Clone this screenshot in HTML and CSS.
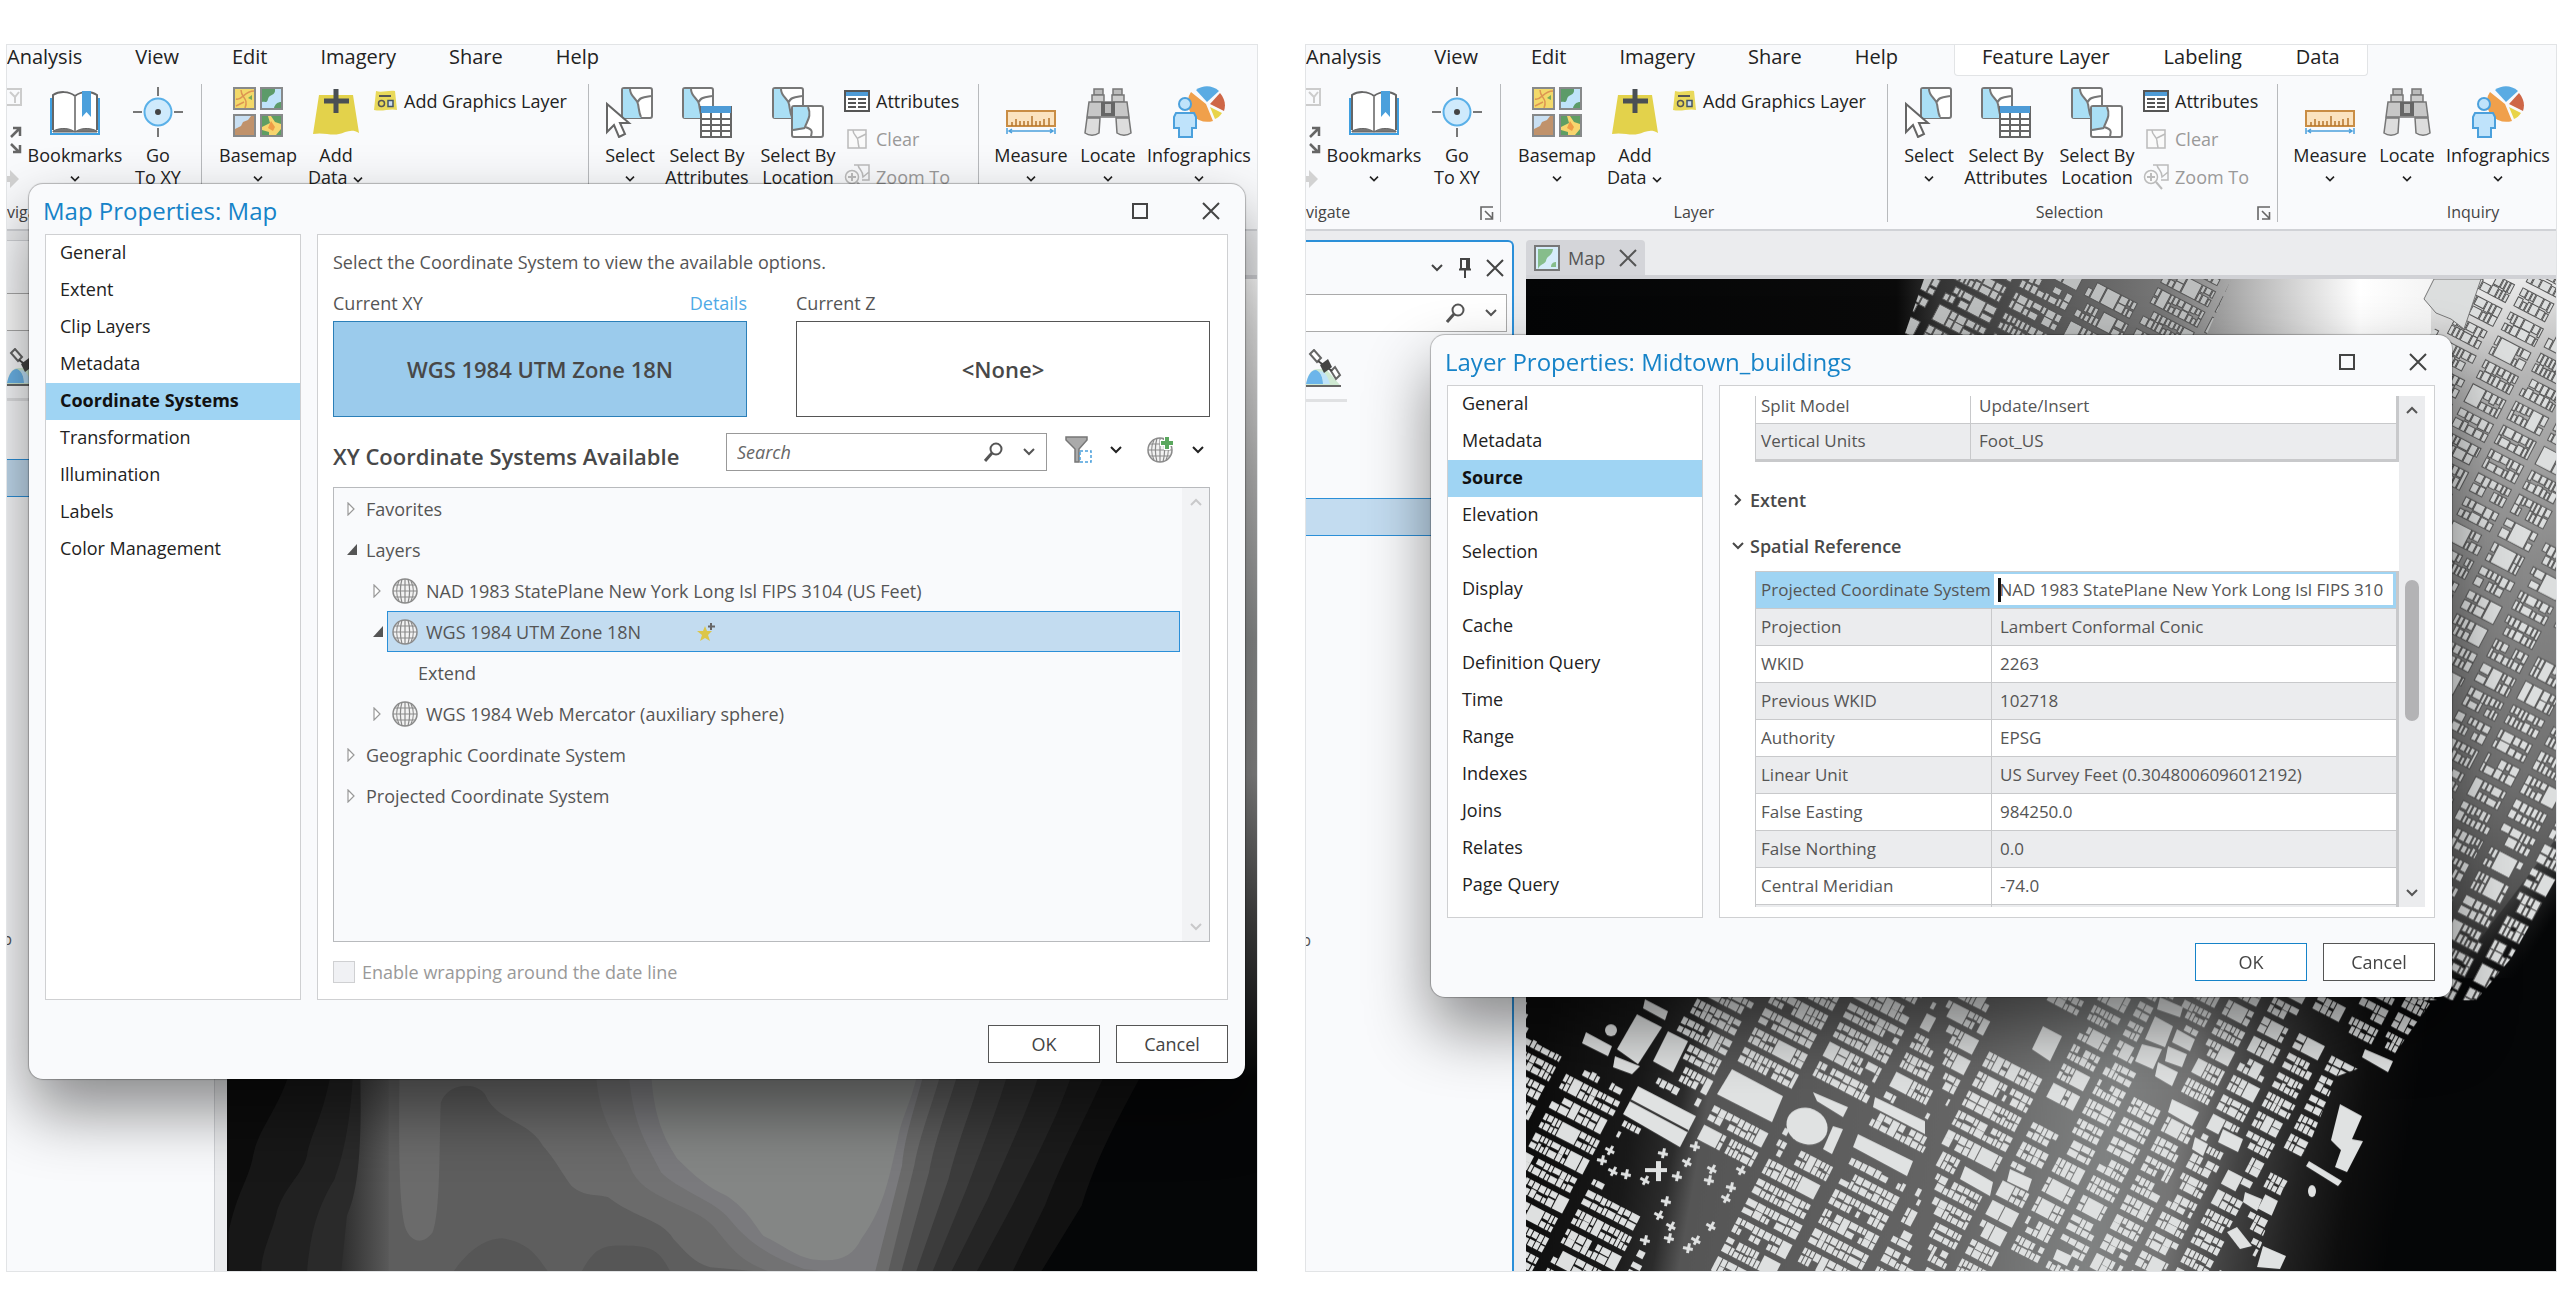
FILE: index.html
```html
<!DOCTYPE html>
<html lang="en">
<head>
<meta charset="utf-8">
<title>Map and layer properties</title>
<link rel="stylesheet" href="styles.css">
</head>
<body>
<svg class="sprite" aria-hidden="true">
  <symbol id="chev" viewBox="0 0 14 10"><path d="M2 2l5 5 5-5" fill="none" stroke="currentColor" stroke-width="2"/></symbol>
  <symbol id="close" viewBox="0 0 18 18"><path d="M1 1l16 16M17 1L1 17" fill="none" stroke="currentColor" stroke-width="2"/></symbol>
  <symbol id="max" viewBox="0 0 18 18"><path d="M2 2h14v14H2z" fill="none" stroke="currentColor" stroke-width="2"/></symbol>
  <symbol id="mag" viewBox="0 0 20 20"><circle cx="12" cy="7" r="5.500" fill="none" stroke="#555" stroke-width="2"/><path d="M8 11l-7 8" stroke="#555" stroke-width="3"/></symbol>
  <symbol id="pin" viewBox="0 0 14 20"><path d="M3 1h8v10H3zM1 11.500h12M7 12v8M9 1v10" fill="none" stroke="#444" stroke-width="2"/></symbol>
  <symbol id="launch" viewBox="0 0 14 15"><path d="M1 14V1h12M5 5l7 7M12.500 6v7H5" fill="none" stroke="#666" stroke-width="1.600"/></symbol>
  <symbol id="book" viewBox="0 0 50 46"><path d="M1 9v36h48V9" fill="#fff" stroke="#3f9fe0" stroke-width="2"/><path d="M3 41V6c6-4 16-4 22 1 6-5 16-5 22-1v35" fill="#fff" stroke="#666" stroke-width="2"/><path d="M3 42c8-4 17-3 22 1 5-4 14-5 22-1v1H3z" fill="#777" stroke="#666"/><path d="M25 7v35" stroke="#888" stroke-width="2"/><path d="M32 2h9v26l-4.500-5-4.500 5z" fill="#4ba0dc"/></symbol>
  <symbol id="gotoxy" viewBox="0 0 50 50"><circle cx="25" cy="25" r="13.500" fill="#cfeafc" stroke="#5ab0e8" stroke-width="2"/><circle cx="25" cy="25" r="3" fill="#444"/><path d="M25 0v9M25 41v9M0 25h9M41 25h9" stroke="#777" stroke-width="2"/></symbol>
  <symbol id="basemap" viewBox="0 0 50 50"><g stroke="#87898a" stroke-width="2"><path d="M1 1h21v21H1z" fill="#f3d96a"/><path d="M28 1h21v21H28z" fill="#bfe3fa"/><path d="M1 28h21v21H1z" fill="#c9dff2"/><path d="M28 28h21v21H28z" fill="#f7d56e"/></g><path d="M3 12c6 2 8-8 18-8M8 3c0 8 8 8 4 18M3 19l8-4" fill="none" stroke="#dd9552" stroke-width="1.500"/><path d="M15 11l4-3v5z" fill="#7aa957"/><path d="M29 2h13c1 7-6 5-7 10-1 5-4 2-6 3zM41 21c1-4 4-6 7-6v6z" fill="#5c9b69"/><path d="M2 48V42l6-3 2-4 5-2 3-4h3v19z" fill="#c0926b"/><path d="M29 29h6l2 7-8 4zM38 29h10v8l-6-2zM29 43l7 2v3h-7zM43 48l5-6v6z" fill="#5f9e63"/><path d="M38 34l4 6-2 4-5-3z" fill="#ee9c47"/></symbol>
  <symbol id="adddata" viewBox="0 0 48 46"><path d="M7 6h34l6 38c-8-5-14 0-20 1-8 2-15-2-26 0z" fill="#e3d24b"/><path d="M24 0v24M12 12h25" stroke="#4a4f54" stroke-width="5"/></symbol>
  <symbol id="graphics" viewBox="0 0 25 22"><path d="M3 1c6 2 12-1 19 0l2 19c-7-2-14 2-23 0z" fill="#e9d95a"/><path d="M6 6h12" stroke="#555" stroke-width="2"/><circle cx="8.500" cy="13.500" r="3" fill="none" stroke="#555" stroke-width="1.500"/><path d="M15 10.500h5v6h-5z" fill="#cde" stroke="#456" stroke-width="1.500"/></symbol>
  <symbol id="piece" viewBox="0 0 32 32"><rect x="1" y="1" width="30" height="30" rx="2" fill="#fff" stroke="#777" stroke-width="2"/><path d="M2 2h7c0 8 7 9 8 15 1 5 1 9 3 14H2z" fill="#aadff5"/><path d="M9 2c0 8 7 9 8 15 1 5 1 9 3 13M17 15c1-5 8-5 13-6" fill="none" stroke="#777" stroke-width="2"/></symbol>
  <symbol id="select" viewBox="0 0 48 52"><use href="#piece" x="15" y="1" width="32" height="32"/><path d="M1 18v28l7-7 5 12 6-3-5-11h9z" fill="#fff" stroke="#666" stroke-width="2"/></symbol>
  <symbol id="selattr" viewBox="0 0 50 52"><use href="#piece" x="0" y="1" width="32" height="32"/><path d="M19 21h30v30H19z" fill="#fff" stroke="#666" stroke-width="2"/><path d="M19 20h30v7H19z" fill="#4e9bd6"/><path d="M20 33h29M20 39h29M20 45h29M29 27v24M39 27v24" stroke="#666" stroke-width="2"/></symbol>
  <symbol id="selloc" viewBox="0 0 52 52"><use href="#piece" x="0" y="1" width="32" height="32"/><rect x="20" y="20" width="31" height="31" rx="2" fill="#fff" stroke="#777" stroke-width="2"/><path d="M21 21h15c4 9-1 14-3 22l-12 2z" fill="#aadff5"/><path d="M36 21c4 9-1 14-3 20 10 3 6 6 6 10M33 42l-12 2" fill="none" stroke="#777" stroke-width="2"/></symbol>
  <symbol id="attrs" viewBox="0 0 26 22"><path d="M1 1h24v20H1z" fill="#fff" stroke="#555" stroke-width="2"/><path d="M2 2h22v4H2z" fill="#4e9bd6"/><path d="M4 9h8M4 13h8M4 17h8M14 9h8M14 13h8M14 17h8" stroke="#555" stroke-width="2"/></symbol>
  <symbol id="clear" viewBox="0 0 20 20"><path d="M1 1h18v18H1z" fill="#fafafa" stroke="#bbb" stroke-width="1.500"/><path d="M6 1c0 6 5 6 5 11 0 3 1 5 1 7M11 9l8-4" fill="none" stroke="#bbb" stroke-width="1.500"/></symbol>
  <symbol id="zoomto" viewBox="0 0 26 26"><path d="M10 1h15v15h-7M14 1c1 5 5 5 5 12l6-5" fill="none" stroke="#bbb" stroke-width="1.500"/><circle cx="8" cy="13" r="6.500" fill="#fafafa" stroke="#bbb" stroke-width="1.500"/><path d="M4 13h8M8 9v8M13 18l6 7" stroke="#bbb" stroke-width="2"/></symbol>
  <symbol id="measure" viewBox="0 0 50 26"><path d="M1 2h48v15H1z" fill="#fbe3c0" stroke="#c98d45" stroke-width="2"/><path d="M6 17v-4M10 17v-7M14 17v-5M18 17v-5M22 17v-5M26 17V7M30 17v-5M34 17v-5M38 17v-7M43 17v-8" stroke="#b5752c" stroke-width="1.500"/><path d="M1 19v6M49 19v6M3 22h44M6 20l-3 2 3 2M44 20l3 2-3 2" stroke="#4ba0dc" stroke-width="1.500" fill="none"/></symbol>
  <symbol id="locate" viewBox="0 0 48 48"><g stroke="#777" stroke-width="1.500"><path d="M10 1h9v6h-9zM29 1h9v6h-9z" fill="#bbb"/><path d="M8 7h12v7H8zM28 7h12v7H28z" fill="#ccc"/><path d="M5 14h38l2 15H3z" fill="#c7c7c7"/><path d="M3 30h13l-1 15c-4 3-10 3-14 0zM32 30h13l2 15c-4 3-10 3-14 0z" fill="#ddd"/></g><path d="M17 14h14v14H17z" fill="#666"/><path d="M21 16h6v9h-6z" fill="#bbb"/></symbol>
  <symbol id="info" viewBox="0 0 52 52"><path d="M33 18L18 6a19 19 0 0 0 8 28 20 20 0 0 0 14 1z" fill="#f0a04b"/><path d="M34 16L23 4c7-5 16-5 23 1z" fill="#5aabe3"/><path d="M37 18l10-11c5 6 6 12 4 18z" fill="#ce6647"/><path d="M37 21l12 6c-2 3-4 5-7 6z" fill="#e8d449"/><circle cx="12" cy="18" r="6" fill="#bfe3fb" stroke="#4ba0dc" stroke-width="2"/><path d="M3 27h18l2 4v11h-4v9H6v-9H1V31z" fill="#bfe3fb" stroke="#4ba0dc" stroke-width="2"/></symbol>
  <symbol id="edge" viewBox="0 0 12 104"><path d="M-6 3H11v16h-17M0 6l5 5 4-5M5 11v6" fill="none" stroke="#ccc" stroke-width="2"/><path d="M1 51l8-8M3 42h7v8M1 58l8 8M10 59v7H3" fill="none" stroke="#666" stroke-width="2.500"/><path d="M0 84l9 9-9 9v-6h-6v-6h6z" fill="#d2d2d2"/></symbol>
  <symbol id="globe" viewBox="0 0 26 26"><circle cx="13" cy="13" r="12" fill="#f2f2f2" stroke="#8a8a8a" stroke-width="1.500"/><path d="M1 13h24M3 7h20M3 19h20M13 1v24M7 3c-3 6-3 14 0 20M19 3c3 6 3 14 0 20M10 1c-2 7-2 16 0 24M16 1c2 7 2 16 0 24" fill="none" stroke="#8a8a8a" stroke-width="1.200"/></symbol>
  <symbol id="filter" viewBox="0 0 28 28"><path d="M1 1h21v3l-8 9v13h-4V13L1 4z" fill="#aaa" stroke="#777" stroke-width="1.500"/><path d="M15 15h11v11H15z" fill="#fff" stroke="#4ba0dc" stroke-width="1.500" stroke-dasharray="3 2"/></symbol>
  <symbol id="globeadd" viewBox="0 0 28 28"><use href="#globe" x="0" y="1" width="26" height="26"/><path d="M20 1v13M13 7h14" stroke="#fff" stroke-width="6"/><path d="M20 1v12M14 7h12" stroke="#5aa75e" stroke-width="4"/></symbol>
  <symbol id="star" viewBox="0 0 18 18"><path d="M8 3l2 5h5l-4 4 2 6-5-3-5 3 2-6-5-4h6z" fill="#dcc64a"/><path d="M14 0v7M11 3.500h7" stroke="#666" stroke-width="2"/></symbol>
  <symbol id="closed" viewBox="0 0 8 14"><path d="M1 1l6 6-6 6z" fill="#fff" stroke="#999" stroke-width="1.200"/></symbol>
  <symbol id="open" viewBox="0 0 11 12"><path d="M11 0v12H0z" fill="#555"/></symbol>
  <symbol id="mapico" viewBox="0 0 26 26"><path d="M1 1h24v24H1z" fill="#d6ecfa" stroke="#777" stroke-width="2"/><path d="M4 4h15c-1 8-6 6-7 12-2 4-5 2-8 8zM17 22c0-4 3-5 5-5v5z" fill="#86bd8b"/></symbol>
  <symbol id="sat" viewBox="0 0 36 38"><path d="M0 36c2-12 6-16 12-16h8l14 16z" fill="#cfe9d2"/><path d="M0 35c2-9 5-14 10-14 5 2 7 8 7 14z" fill="#6cb5ea"/><path d="M17 35c0-6-2-10-4-13 6 0 9 6 11 13z" fill="#bfe3fa"/><path d="M0 37h35" stroke="#666" stroke-width="2"/><g fill="#fff" stroke="#666" stroke-width="2"><path d="M4 5l4-4 7 8-4 4zM25 22l4-4 5 8-4 4z"/></g><path d="M14 16l8-6 4 8-8 6z" fill="#444"/><path d="M12 12l14 10" stroke="#444" stroke-width="2"/></symbol>
</svg>

<main class="shots">
<section class="app" aria-label="Map window">
  <div class="ribbon">
    <nav class="tabs"><button class="tab tab-cut">Analysis</button><button class="tab">View</button><button class="tab">Edit</button><button class="tab">Imagery</button><button class="tab">Share</button><button class="tab">Help</button></nav>
    <div class="groups">
      <div class="group g-nav"><div class="tools"><svg class="edge"><use href="#edge"/></svg>
        <button class="tool w100"><svg class="ico" width="50" height="46"><use href="#book"/></svg><span>Bookmarks</span><svg class="dd"><use href="#chev"/></svg></button>
        <button class="tool w66"><svg class="ico" width="50" height="50"><use href="#gotoxy"/></svg><span>Go<br>To XY</span></button></div>
        <div class="caption caption-cut"><span>vigate</span><svg class="launch"><use href="#launch"/></svg></div></div>
      <div class="group g-layer"><div class="tools">
        <button class="tool w88"><svg class="ico" width="50" height="50"><use href="#basemap"/></svg><span>Basemap</span><svg class="dd"><use href="#chev"/></svg></button>
        <button class="tool w68"><svg class="ico" width="48" height="46"><use href="#adddata"/></svg><span>Add<br>Data <svg class="dd-in"><use href="#chev"/></svg></span></button>
        <div class="stack"><button class="mini"><svg width="25" height="22"><use href="#graphics"/></svg>Add Graphics Layer</button></div></div>
        <div class="caption">Layer</div></div>
      <div class="group g-sel"><div class="tools">
        <button class="tool w58"><svg class="ico" width="48" height="52"><use href="#select"/></svg><span>Select</span><svg class="dd"><use href="#chev"/></svg></button>
        <button class="tool w96"><svg class="ico" width="50" height="52"><use href="#selattr"/></svg><span>Select By<br>Attributes</span></button>
        <button class="tool w86"><svg class="ico" width="52" height="52"><use href="#selloc"/></svg><span>Select By<br>Location</span></button>
        <div class="stack"><button class="mini"><svg width="26" height="22"><use href="#attrs"/></svg>Attributes</button><button class="mini" disabled><svg width="26" height="20"><use href="#clear"/></svg>Clear</button><button class="mini" disabled><svg width="26" height="26"><use href="#zoomto"/></svg>Zoom To</button></div></div>
        <div class="caption">Selection<svg class="launch"><use href="#launch"/></svg></div></div>
      <div class="group g-inq"><div class="tools">
        <button class="tool w88"><svg class="ico low" width="50" height="26"><use href="#measure"/></svg><span>Measure</span><svg class="dd"><use href="#chev"/></svg></button>
        <button class="tool w66"><svg class="ico" width="48" height="48"><use href="#locate"/></svg><span>Locate</span><svg class="dd"><use href="#chev"/></svg></button>
        <button class="tool w116"><svg class="ico" width="52" height="52"><use href="#info"/></svg><span>Infographics</span><svg class="dd"><use href="#chev"/></svg></button></div>
        <div class="caption">Inquiry</div></div>
    </div>
  </div>
  <div class="work">
    <aside class="pane">
      <div class="pane-head"></div><div class="pane-search"></div>
      <div class="pane-tools"><svg width="36" height="38"><use href="#sat"/></svg></div>
      <div class="pane-row row-first"></div><div class="pane-text">p</div>
    </aside>
    <div class="view"><div class="view-tabs"></div>
      <svg class="map" viewBox="0 0 1030 993" preserveAspectRatio="none" role="img" aria-label="Elevation surface">
        <defs>
          <linearGradient id="strip" x1="0" y1="0" x2="0" y2="1"><stop offset="0" stop-color="#fff"/><stop offset=".06" stop-color="#e8e8e8"/><stop offset=".25" stop-color="#b8b8b8"/><stop offset=".45" stop-color="#8d8f8f"/><stop offset=".62" stop-color="#888"/><stop offset=".8" stop-color="#444"/><stop offset="1" stop-color="#050607"/></linearGradient>
          <linearGradient id="rise"><stop offset="0" stop-color="#2e2e2e"/><stop offset="1" stop-color="#5e5e5e"/></linearGradient>
        </defs>
        <rect width="1030" height="993" fill="#0c0c0c"/>
        <g transform="translate(-227 561) scale(.8163 .3333)">
          <path fill="#171717" d="M365 600C350 800 318 850 310 950 305 1020 290 1060 280 1180V1300H1500V600z"/>
          <path fill="#212121" d="M410 600C405 800 380 880 376 950 370 1010 345 1050 338 1130 330 1200 320 1240 320 1300H1500V600z"/>
          <path fill="#2a2a2a" d="M434 600C432 850 420 950 410 1020 385 1120 380 1200 376 1300H1500V600z"/>
          <path fill="url(#rise)" d="M440 600C445 900 440 1050 425 1130L418 1300H482V600z"/>
          <path fill="#5e5e5e" d="M476 600H1500V1300H476z"/>
          <path fill="#6b6b6b" d="M490 600C488 900 488 1100 497 1170 505 1215 520 1215 530 1180 540 1120 538 900 540 790 550 725 590 725 597 780 615 850 650 850 665 920 680 960 690 1010 700 1040 715 1075 735 1065 745 1075 780 1140 810 1140 825 1200 840 1240 850 1270 870 1285L940 1300H1500V600z"/>
          <path fill="#727273" d="M730 600C724 850 760 900 775 1000 795 1090 860 1100 880 1180 900 1240 910 1270 945 1300H1500V600z"/>
          <path fill="#7a7a7d" d="M768 600C770 850 790 900 810 1000 830 1050 870 1080 890 1130 910 1190 930 1240 985 1290L1020 1300H1500V600z"/>
          <path fill="#848685" d="M797 600C795 830 815 900 830 960 850 1010 870 1050 890 1070 915 1110 925 1160 935 1190 960 1220 980 1260 1000 1262 1030 1270 1045 1250 1055 1200 1085 1100 1090 1000 1100 900 1105 820 1125 760 1130 600z"/>
          <path fill="#6b6b6b" d="M1140 600C1130 760 1110 850 1105 980L1072 1300H1500V600z"/>
          <path fill="#5b5b5b" d="M1162 600C1150 760 1130 850 1120 980L1088 1300H1500V600z"/>
          <path fill="#4b4b4b" d="M1184 600C1170 760 1150 850 1138 1000L1104 1300H1500V600z"/>
          <path fill="#3c3c3c" d="M1212 600C1200 760 1180 850 1162 1020L1122 1300H1500V600z"/>
          <path fill="#303030" d="M1246 600C1230 760 1210 880 1184 1050L1142 1300H1500V600z"/>
          <path fill="#252525" d="M1285 600C1270 760 1245 880 1210 1080L1165 1300H1500V600z"/>
          <path fill="#1b1b1b" d="M1325 600C1310 760 1285 880 1240 1100L1196 1300H1500V600z"/>
          <path fill="#111" d="M1368 600C1350 760 1315 880 1280 1100L1240 1300H1600V600z"/>
          <path fill="#050607" d="M1420 600C1390 760 1350 900 1325 1100L1275 1300H1600V600z"/>
          <path fill="#565656" d="M555 1300C575 1230 595 1200 615 1198 650 1210 660 1260 672 1300zM712 1300C730 1220 740 1218 770 1220 805 1220 810 1250 822 1300z"/>
        </g>
        <rect x="980" width="50" height="800" fill="url(#strip)"/>
      </svg></div>
  </div>
  <div class="dialog dialog-map" role="dialog" aria-label="Map Properties: Map">
    <header class="title"><h1>Map Properties: Map</h1><button aria-label="Maximize"><svg width="18" height="18"><use href="#max"/></svg></button><button aria-label="Close"><svg width="18" height="18"><use href="#close"/></svg></button></header>
    <div class="body">
      <nav class="pages"><button>General</button><button>Extent</button><button>Clip Layers</button><button>Metadata</button><button class="on">Coordinate Systems</button><button>Transformation</button><button>Illumination</button><button>Labels</button><button>Color Management</button></nav>
      <div class="content crs">
        <p class="intro">Select the Coordinate System to view the available options.</p>
        <div class="current">
          <div><div class="cur-head"><span>Current XY</span><a href="#details">Details</a></div><button class="cur on">WGS 1984 UTM Zone 18N</button></div>
          <div><div class="cur-head"><span>Current Z</span></div><button class="cur">&lt;None&gt;</button></div>
        </div>
        <div class="finder"><h2>XY Coordinate Systems Available</h2>
          <div class="search"><input type="text" placeholder="Search" aria-label="Search"><svg width="20" height="20"><use href="#mag"/></svg><svg class="thin" width="14" height="10"><use href="#chev"/></svg></div>
          <button class="menu" aria-label="Filter"><svg width="28" height="28"><use href="#filter"/></svg><svg width="14" height="10"><use href="#chev"/></svg></button>
          <button class="menu" aria-label="Add coordinate system"><svg width="28" height="28"><use href="#globeadd"/></svg><svg width="14" height="10"><use href="#chev"/></svg></button></div>
        <div class="tree">
          <ul>
            <li><div class="node"><i><svg width="8" height="14"><use href="#closed"/></svg></i><span>Favorites</span></div></li>
            <li><div class="node"><i><svg width="10" height="11"><use href="#open"/></svg></i><span>Layers</span></div>
              <ul>
                <li><div class="node"><i><svg width="8" height="14"><use href="#closed"/></svg></i><span><svg width="26" height="26"><use href="#globe"/></svg>NAD 1983 StatePlane New York Long Isl FIPS 3104 (US Feet)</span></div></li>
                <li><div class="node"><i><svg width="10" height="11"><use href="#open"/></svg></i><span class="picked"><svg width="26" height="26"><use href="#globe"/></svg>WGS 1984 UTM Zone 18N<svg class="fav" width="18" height="18"><use href="#star"/></svg></span></div>
                  <ul><li><div class="node"><i></i><span>Extend</span></div></li></ul></li>
                <li><div class="node"><i><svg width="8" height="14"><use href="#closed"/></svg></i><span><svg width="26" height="26"><use href="#globe"/></svg>WGS 1984 Web Mercator (auxiliary sphere)</span></div></li>
              </ul></li>
            <li><div class="node"><i><svg width="8" height="14"><use href="#closed"/></svg></i><span>Geographic Coordinate System</span></div></li>
            <li><div class="node"><i><svg width="8" height="14"><use href="#closed"/></svg></i><span>Projected Coordinate System</span></div></li>
          </ul>
          <div class="bar faint"><svg class="up" width="14" height="10"><use href="#chev"/></svg><svg width="14" height="10"><use href="#chev"/></svg></div>
        </div>
        <label class="wrap"><input type="checkbox" disabled>Enable wrapping around the date line</label>
      </div>
    </div>
    <footer class="actions"><button>OK</button><button>Cancel</button></footer>
  </div>
</section>

<section class="app" aria-label="Layer window">
  <div class="ribbon">
    <nav class="tabs"><button class="tab tab-cut">Analysis</button><button class="tab">View</button><button class="tab">Edit</button><button class="tab">Imagery</button><button class="tab">Share</button><button class="tab">Help</button><span class="context"><button class="tab">Feature Layer</button><button class="tab">Labeling</button><button class="tab">Data</button></span></nav>
    <div class="groups">
      <div class="group g-nav"><div class="tools"><svg class="edge"><use href="#edge"/></svg>
        <button class="tool w100"><svg class="ico" width="50" height="46"><use href="#book"/></svg><span>Bookmarks</span><svg class="dd"><use href="#chev"/></svg></button>
        <button class="tool w66"><svg class="ico" width="50" height="50"><use href="#gotoxy"/></svg><span>Go<br>To XY</span></button></div>
        <div class="caption caption-cut"><span>vigate</span><svg class="launch"><use href="#launch"/></svg></div></div>
      <div class="group g-layer"><div class="tools">
        <button class="tool w88"><svg class="ico" width="50" height="50"><use href="#basemap"/></svg><span>Basemap</span><svg class="dd"><use href="#chev"/></svg></button>
        <button class="tool w68"><svg class="ico" width="48" height="46"><use href="#adddata"/></svg><span>Add<br>Data <svg class="dd-in"><use href="#chev"/></svg></span></button>
        <div class="stack"><button class="mini"><svg width="25" height="22"><use href="#graphics"/></svg>Add Graphics Layer</button></div></div>
        <div class="caption">Layer</div></div>
      <div class="group g-sel"><div class="tools">
        <button class="tool w58"><svg class="ico" width="48" height="52"><use href="#select"/></svg><span>Select</span><svg class="dd"><use href="#chev"/></svg></button>
        <button class="tool w96"><svg class="ico" width="50" height="52"><use href="#selattr"/></svg><span>Select By<br>Attributes</span></button>
        <button class="tool w86"><svg class="ico" width="52" height="52"><use href="#selloc"/></svg><span>Select By<br>Location</span></button>
        <div class="stack"><button class="mini"><svg width="26" height="22"><use href="#attrs"/></svg>Attributes</button><button class="mini" disabled><svg width="26" height="20"><use href="#clear"/></svg>Clear</button><button class="mini" disabled><svg width="26" height="26"><use href="#zoomto"/></svg>Zoom To</button></div></div>
        <div class="caption">Selection<svg class="launch"><use href="#launch"/></svg></div></div>
      <div class="group g-inq"><div class="tools">
        <button class="tool w88"><svg class="ico low" width="50" height="26"><use href="#measure"/></svg><span>Measure</span><svg class="dd"><use href="#chev"/></svg></button>
        <button class="tool w66"><svg class="ico" width="48" height="48"><use href="#locate"/></svg><span>Locate</span><svg class="dd"><use href="#chev"/></svg></button>
        <button class="tool w116"><svg class="ico" width="52" height="52"><use href="#info"/></svg><span>Infographics</span><svg class="dd"><use href="#chev"/></svg></button></div>
        <div class="caption">Inquiry</div></div>
    </div>
  </div>
  <div class="work">
    <aside class="pane pane-active">
      <div class="pane-head"><svg width="14" height="10"><use href="#chev"/></svg><svg width="14" height="20"><use href="#pin"/></svg><svg width="18" height="18"><use href="#close"/></svg></div>
      <div class="pane-search"><svg width="20" height="20"><use href="#mag"/></svg><svg width="14" height="10"><use href="#chev"/></svg></div>
      <div class="pane-tools"><svg width="36" height="38"><use href="#sat"/></svg></div>
      <div class="pane-row row-second"></div><div class="pane-text">p</div>
    </aside>
    <div class="view"><div class="view-tabs"><button class="view-tab"><svg width="26" height="26"><use href="#mapico"/></svg>Map<svg width="18" height="18"><use href="#close"/></svg></button></div>
      <canvas class="map" id="city" width="1030" height="993"></canvas></div>
  </div>
  <div class="dialog dialog-layer" role="dialog" aria-label="Layer Properties: Midtown_buildings">
    <header class="title"><h1>Layer Properties: Midtown_buildings</h1><button aria-label="Maximize"><svg width="18" height="18"><use href="#max"/></svg></button><button aria-label="Close"><svg width="18" height="18"><use href="#close"/></svg></button></header>
    <div class="body">
      <nav class="pages"><button>General</button><button>Metadata</button><button class="on">Source</button><button>Elevation</button><button>Selection</button><button>Display</button><button>Cache</button><button>Definition Query</button><button>Time</button><button>Range</button><button>Indexes</button><button>Joins</button><button>Relates</button><button>Page Query</button></nav>
      <div class="content source">
        <div class="scroll">
          <table class="props short"><tr><th>Split Model</th><td>Update/Insert</td></tr><tr><th>Vertical Units</th><td>Foot_US</td></tr></table>
          <button class="fold shut"><svg width="14" height="10"><use href="#chev"/></svg>Extent</button>
          <button class="fold"><svg width="14" height="10"><use href="#chev"/></svg>Spatial Reference</button>
          <table class="props long">
            <tr class="edit"><th><label for="pcs">Projected Coordinate System</label></th><td><input id="pcs" type="text" value="NAD 1983 StatePlane New York Long Isl FIPS 310"><b class="caret"></b></td></tr>
            <tr><th>Projection</th><td>Lambert Conformal Conic</td></tr>
            <tr><th>WKID</th><td>2263</td></tr>
            <tr><th>Previous WKID</th><td>102718</td></tr>
            <tr><th>Authority</th><td>EPSG</td></tr>
            <tr><th>Linear Unit</th><td>US Survey Feet (0.3048006096012192)</td></tr>
            <tr><th>False Easting</th><td>984250.0</td></tr>
            <tr><th>False Northing</th><td>0.0</td></tr>
            <tr><th>Central Meridian</th><td>-74.0</td></tr>
            <tr><th></th><td></td></tr>
          </table>
        </div>
        <div class="bar"><svg class="up" width="14" height="10"><use href="#chev"/></svg><div class="thumb"></div><svg width="14" height="10"><use href="#chev"/></svg></div>
      </div>
    </div>
    <footer class="actions"><button class="default">OK</button><button>Cancel</button></footer>
  </div>
</section>
</main>
<script src="map.js"></script>
</body>
</html>
```

FILE: styles.css
```css
* { box-sizing: border-box; }
body { margin: 0; background: #fff; color: #333; font: 18px/22px "Open Sans", "Noto Sans", sans-serif; }
button { margin: 0; padding: 0; border: 0; background: none; color: inherit; font: inherit; text-align: left; }
ul { margin: 0; padding: 0; list-style: none; }
h1, h2, p { margin: 0; font-weight: 400; }
svg { flex: none; }
.sprite { position: absolute; width: 0; height: 0; }

.shots { display: grid; grid-template-columns: minmax(0, 1fr) minmax(0, 1fr); gap: 47px; min-height: 100vh; padding: 44px 3px 42px 6px; }
.app { position: relative; display: flex; flex-direction: column; overflow: hidden; border: 1px solid #e2e4e6; background: #f9fafc; }

/* ribbon */
.ribbon { color: #222; border-bottom: 2px solid #d0d2d6; }
.tabs { display: flex; height: 31px; font-size: 20px; padding-bottom: 7px; }
.tab { padding: 0 27px 0 26px; white-space: nowrap; }
.tab-cut { padding-left: 0; }
.context { display: flex; height: 31px; margin-left: 29px; padding: 0 0 7px; background: #fff; border: 1px solid #e2e4e6; border-top: 0; border-radius: 0 0 4px 4px; }
.context .tab { padding: 0 27px; }
.groups { display: flex; padding-top: 8px; }
.group { flex: none; display: flex; flex-direction: column; height: 138px; margin-bottom: 7px; border-right: 1px solid #b8babd; }
.g-nav { width: 195px; }
.g-layer { width: 387px; }
.g-sel { width: 390px; }
.g-inq { width: 390px; border: 0; }
.tools { display: flex; height: 122px; padding-top: 2px; }
.g-layer .tools, .g-sel .tools { padding-left: 12px; }
.g-inq .tools { padding-left: 8px; }
.edge { width: 18px; height: 104px; }
.tool { display: flex; flex-direction: column; align-items: center; justify-content: flex-start; text-align: center; white-space: nowrap; }
.tool span { flex: none; }
.ico { margin-bottom: 6px; height: 52px; }
.low { padding-top: 20px; }
.dd { width: 12px; height: 8px; margin-top: 9px; }
.dd-in { width: 12px; height: 8px; }
.w58 { width: 58px; } .w66 { width: 66px; } .w68 { width: 68px; } .w86 { width: 86px; } .w88 { width: 88px; } .w96 { width: 96px; } .w100 { width: 100px; } .w116 { width: 116px; }
.stack { display: flex; flex-direction: column; gap: 6px; padding-left: 3px; }
.mini { display: flex; align-items: center; gap: 6px; height: 32px; padding-bottom: 2px; white-space: nowrap; }
.mini:disabled { color: #999; }
.caption { position: relative; height: 20px; color: #444; font-size: 16px; line-height: 20px; text-align: center; }
.caption-cut { text-align: left; }
.g-sel .caption { padding-right: 26px; }
.launch { position: absolute; right: 6px; top: 4px; width: 14px; height: 15px; }

/* workspace behind the dialogs */
.work { flex: 1; display: grid; grid-template-columns: 208px minmax(0, 1fr); gap: 12px; padding-top: 9px; background: #ebecee; }
.pane { background: #f9fafc; border-top: 1px solid #d0d2d6; border-right: 1px solid #d0d2d6; }
.pane-active { border: solid #2b8fd8; border-width: 2px 2px 0 0; border-radius: 0 6px 0 0; }
.pane-head { display: flex; align-items: center; justify-content: flex-end; gap: 14px; height: 52px; padding-right: 8px; color: #444; }
.pane-search { display: flex; align-items: center; justify-content: flex-end; gap: 18px; height: 38px; margin-right: 5px; padding-right: 8px; background: #fff; border: 1px solid #aaa; border-left: 0; color: #555; }
.pane-tools { height: 70px; width: 41px; padding-top: 17px; border-bottom: 3px solid #e0e1e3; }
.pane-row { height: 38px; background: #c3dcf0; border: solid #2b8fd8; border-width: 1px 0; }
.row-first { margin: 58px 0 434px; }
.row-second { margin: 96px 0 396px; }
.pane-text { width: 5px; margin-top: -3px; overflow: hidden; direction: rtl; font-size: 16px; color: #555; }
.view { display: flex; flex-direction: column; min-width: 0; }
.view-tabs { height: 39px; border-bottom: 4px solid #d0d1d5; }
.view-tab { display: flex; align-items: center; gap: 8px; height: 35px; padding: 0 8px; background: #d4d5d9; border-radius: 4px 4px 0 0; color: #555; }
.view-tab svg:last-child { margin-left: 6px; }
.map { display: block; flex: 1 1 0; width: 100%; min-height: 0; }

/* dialogs */
.dialog { position: absolute; display: flex; flex-direction: column; padding: 0 17px 16px 16px; background: #f9fafc; border-radius: 14px; box-shadow: 0 0 1px 1px rgba(0, 0, 0, .25), 0 32px 64px rgba(0, 0, 0, .45); }
.dialog-map { inset: 139px 12px 192px 22px; }
.dialog-layer { inset: 290px 104px 274px 125px; }
.title { display: flex; align-items: center; height: 50px; margin-left: -2px; padding: 4px 8px 0 0; gap: 53px; color: #444; }
.title h1 { flex: 1; font-size: 24px; line-height: 32px; color: #1683c8; }
.title button { display: flex; }
.body { flex: 1; min-height: 0; display: grid; grid-template-columns: 256px minmax(0, 1fr); grid-template-rows: minmax(0, 1fr); gap: 16px; }
.pages, .content { border: 1px solid #cfd0d2; background: #fff; }
.pages { display: flex; flex-direction: column; color: #222; }
.pages button { flex: none; height: 37px; padding: 0 0 3px 14px; }
.pages .on { background: #9fd4f3; color: #111; font-weight: 700; }
.actions { display: flex; justify-content: flex-end; gap: 16px; padding-top: 25px; }
.actions button { width: 112px; height: 38px; border: 1px solid #555; background: #fff; text-align: center; color: #444; }
.actions .default { border-color: #1683c8; }

/* coordinate system page */
.crs { display: flex; flex-direction: column; padding: 16px 17px 16px 15px; color: #555; }
.current { display: grid; grid-template-columns: 1fr 1fr; gap: 49px; margin-top: 19px; }
.cur-head { display: flex; justify-content: space-between; height: 29px; }
.cur-head a { color: #4faae6; text-decoration: none; }
.cur { display: block; width: 100%; height: 96px; border: 1px solid #555; background: #fff; color: #484848; font-size: 22px; font-weight: 600; text-align: center; }
.cur.on { background: #9bcbec; border-color: #2b7fb8; }
.finder { display: flex; align-items: center; height: 38px; margin: 16px 0; }
.finder h2 { flex: 1; padding-top: 8px; font-size: 22px; font-weight: 600; color: #484848; white-space: nowrap; }
.search { display: flex; align-items: center; gap: 18px; width: 321px; height: 38px; padding: 0 10px; border: 1px solid #999; background: #fff; }
.search input { flex: 1; min-width: 0; padding: 0; border: 0; font: inherit; font-style: italic; }
.search input::placeholder { color: #666; opacity: 1; }
.menu { display: flex; align-items: center; gap: 16px; margin-left: 18px; padding-bottom: 4px; color: #222; }
.menu + .menu { margin-left: 24px; margin-right: 5px; }
.tree { flex: 1; display: flex; min-height: 0; border: 1px solid #b8babd; background: #f9fafc; }
.tree > ul { flex: 1; padding: 0 2px 0 13px; }
.tree ul ul { padding-left: 26px; }
.node { display: flex; align-items: center; height: 41px; }
.node i { display: flex; width: 14px; }
.node i svg { display: block; }
.node span { flex: 1; display: flex; align-items: center; gap: 8px; height: 41px; padding-left: 5px; white-space: nowrap; }
.node .picked { padding-left: 4px; background: #c3dcf0; border: 1px solid #2b8fd8; }
.fav { margin-left: 48px; }
.bar { display: flex; flex-direction: column; justify-content: space-between; align-items: center; width: 27px; padding: 9px 0; background: #ebecee; color: #555; }
.faint { background: #f2f3f5; color: #c8c8ca; }
.up { transform: scaleY(-1); }
.wrap { display: flex; align-items: center; gap: 7px; height: 22px; margin: 19px 0 0; color: #999; }
.wrap input { appearance: none; width: 22px; height: 22px; margin: 0; border: 1px solid #cfd0d2; background: #f0f1f4; }

/* source page */
.source { display: flex; padding: 10px 9px 10px 0; color: #555; }
.scroll { flex: 1; min-width: 0; overflow: hidden; }
.source .bar { position: relative; width: 26px; }
.thumb { position: absolute; top: 184px; left: 6px; width: 14px; height: 141px; border-radius: 7px; background: #b3b3b5; }
.props { width: calc(100% - 35px); margin-left: 35px; border-collapse: collapse; table-layout: fixed; border-right: 3px solid #c8c9cb; border-left: 1px solid #c8c9cb; font-size: 17px; line-height: 20px; }
.props th, .props td { height: 37px; padding: 0 0 0 5px; border-bottom: 1px solid #c8c9cb; font-weight: 400; text-align: left; white-space: nowrap; }
.props td { padding-left: 8px; border-left: 1px solid #c8c9cb; }
.short { border-bottom: 3px solid #c8c9cb; margin-bottom: 23px; }
.short th { width: 215px; }
.short tr:first-child th, .short tr:first-child td { height: 27px; padding-bottom: 6px; }
.long th { width: 236px; }
.props tr:nth-child(even) { background: #ebecee; }
.long { border-top: 1px solid #c8c9cb; margin-top: 10px; }
.props .edit th { background: #9fd4f3; }
.props .edit td { position: relative; padding: 0 0 0 2px; background: #9fd4f3; border-left: 0; }
.edit input { display: block; width: calc(100% - 3px); height: 31px; padding: 0 0 0 6px; border: 0; background: #fff; color: #555; font: inherit; }
.caret { position: absolute; left: 6px; top: 6px; width: 3px; height: 24px; background: #111; }
.fold { display: flex; align-items: center; gap: 5px; height: 30px; margin: 0 0 16px 11px; font-weight: 600; color: #484848; }
.fold + .fold { margin-bottom: 0; }
.shut svg { transform: rotate(-90deg); }
```

FILE: map.js
```js
// Draws the building footprints over the elevation surface.
const canvas = document.getElementById('city');
const g = canvas.getContext('2d');
let seed = 7;
const rnd = () => { seed = (seed * 16807) % 2147483647; return seed / 2147483647; };

const SLOPE = 27.5 * Math.PI / 180;
const COS = Math.cos(SLOPE), SIN = Math.sin(SLOPE);

function ramp(x0, y0, x1, y1, stops) {
  const r = g.createLinearGradient(x0, y0, x1, y1);
  stops.forEach(([at, color]) => r.addColorStop(at, color));
  return r;
}
function poly(points) {
  g.beginPath();
  points.forEach(([x, y], i) => (i ? g.lineTo(x, y) : g.moveTo(x, y)));
  g.closePath();
}
function inside(points, x, y) {
  let hit = false;
  for (let i = 0, j = points.length - 1; i < points.length; j = i++) {
    const [xi, yi] = points[i], [xj, yj] = points[j];
    if ((yi > y) !== (yj > y) && x < (xj - xi) * (y - yi) / (yj - yi) + xi) hit = !hit;
  }
  return hit;
}

// Surface: the south of the island, the northern edge, the eastern strip.
g.fillStyle = '#050607';
g.fillRect(0, 0, 1030, 993);
g.fillStyle = ramp(0, 0, 1030, 0, [[0, '#040506'], [.36, '#0a0a0a'], [.4, '#333'], [.5, '#565656'], [.62, '#777'], [.7, '#b4b4b4'], [.76, '#dedede'], [.81, '#fff'], [.88, '#f4f4f4'], [1, '#aaa']]);
g.fillRect(0, 0, 1030, 300);
g.fillStyle = ramp(900, 0, 1000, 720, [[0, '#f2f2f2'], [.15, '#b5b5b5'], [.4, '#8a8a8a'], [.7, '#707070'], [.85, '#555'], [.98, '#101010'], [1, '#050607']]);
g.fillRect(905, 0, 125, 720);
g.fillStyle = ramp(0, 850, 860, 1000, [[0, '#0c0c0c'], [.12, '#191919'], [.17, '#2c2c2c'], [.2, '#555'], [.5, '#666'], [.66, '#808282'], [.74, '#757575'], [.81, '#444'], [.88, '#222'], [.94, '#0e0e0e'], [1, '#050607']]);
g.fillRect(0, 700, 1030, 293);
g.fillStyle = ramp(950, 640, 1030, 690, [[0, 'rgba(5,6,7,0)'], [.7, '#050607'], [1, '#050607']]);
poly([[1030, 560], [1030, 740], [900, 740], [925, 700]]);
g.fill();

// Large footprints, drawn whole instead of as a block of small buildings.
const landmarks = [
  [[119, 721], [142, 733], [139, 742], [117, 730]],
  [[111, 736], [136, 749], [112, 786], [91, 771]],
  [[89, 778], [114, 788], [106, 796], [87, 789]],
  [[142, 753], [162, 763], [147, 794], [127, 783]],
  [[60, 754], [86, 768], [82, 778], [56, 765]],
  [[206, 791], [257, 818], [246, 844], [191, 816]],
  [[112, 808], [170, 838], [154, 869], [97, 836]],
  [[287, 814], [322, 829], [317, 839], [291, 823]],
  [[307, 848], [317, 851], [306, 876], [297, 871]],
  [[349, 819], [399, 843], [399, 856], [347, 829]],
  [[332, 856], [387, 883], [381, 898], [327, 869]],
  [[439, 888], [467, 904], [464, 918], [434, 901]],
  [[517, 748], [536, 758], [524, 783], [506, 771]],
  [[634, 719], [657, 729], [654, 739], [631, 731]],
  [[629, 738], [647, 748], [639, 769], [619, 761]],
  [[616, 766], [636, 771], [627, 791], [609, 783]],
  [[651, 751], [669, 761], [664, 773], [646, 764]],
  [[642, 768], [661, 776], [656, 789], [639, 783]],
  [[632, 784], [652, 794], [646, 808], [629, 798]],
  [[646, 821], [673, 834], [666, 848], [642, 834]],
  [[697, 851], [717, 861], [712, 874], [692, 864]],
  [[669, 859], [682, 866], [677, 878], [666, 871]],
  [[719, 914], [736, 921], [731, 933], [717, 924]],
  [[484, 891], [506, 901], [502, 913], [481, 903]],
  [[701, 954], [711, 949], [726, 968], [714, 971]],
  [[531, 971], [546, 978], [541, 988], [527, 981]],
  [[737, 968], [760, 978], [754, 991], [731, 989]],
  [[839, 771], [867, 783], [862, 794], [836, 779]]
];
// Parks, squares and the diagonal avenue stay free of buildings.
const open = [
  [[0, 700], [180, 700], [120, 800], [80, 800], [60, 790], [0, 750]],
  [[460, 700], [505, 700], [550, 751], [527, 792], [464, 764]],
  [[100, 800], [175, 838], [155, 870], [92, 838]],
  [[90, 862], [150, 868], [165, 870], [228, 890], [200, 960], [165, 993], [115, 993], [128, 940], [70, 900]],
  [[262, 822], [292, 812], [325, 836], [318, 882], [262, 866]],
  [[409, 700], [421, 700], [417, 844], [398, 993], [384, 993], [404, 844]]
].concat(landmarks.map((shape) => {
  const cx = shape.reduce((s, p) => s + p[0], 0) / 4, cy = shape.reduce((s, p) => s + p[1], 0) / 4;
  return shape.map(([x, y]) => [cx + (x - cx) * 1.22, cy + (y - cy) * 1.22]);
}));

function free(u, v) {
  const x = u * COS - v * SIN, y = u * SIN + v * COS;
  return !open.some((area) => inside(area, x, y));
}
function building(u, v, w, h, look) {
  if (!free(u, v) || !free(u + w, v + h) || !free(u + w / 2, v + h / 2)) return;
  g.fillRect(u, v, w, h);
  if (look.line) g.strokeRect(u, v, w, h);
}
function block(u, v, w, h, look) {
  g.fillStyle = look.fill;
  const kind = rnd();
  if (kind < .04) return;
  let x = u;
  const end = u + w;
  while (x < end - 2) {
    if (rnd() < .1) {
      const bw = Math.min(7 + rnd() * 14, end - x);
      building(x, v, bw, h, look);
      x += bw + 1;
      continue;
    }
    const bw = Math.min(3 + rnd() * rnd() * 9, end - x);
    const top = h * (.36 + rnd() * .16), low = h * (.36 + rnd() * .16);
    if (rnd() > .05) building(x, v, bw, top, look);
    if (rnd() > .05) building(x, v + h - low, bw, low, look);
    x += bw + 1;
  }
}
function district(area, columns, look) {
  g.save();
  poly(area);
  g.clip();
  g.rotate(SLOPE);
  g.strokeStyle = look.line || '#555';
  g.lineWidth = 1;
  columns.forEach(([u, w]) => {
    for (let v = -700 + rnd() * 6; v < 1100; v += look.h + look.street) block(u, v, w, look.h, look);
  });
  g.restore();
}
function columns(from, to, pitch, road) {
  const list = [];
  for (let u = from; u < to; u += pitch) list.push([u + road / 2, pitch - road]);
  return list;
}

// South of the island
district([[0, 700], [925, 700], [914, 711], [867, 778], [811, 798], [784, 864], [757, 911], [737, 958], [731, 993], [0, 993]],
  columns(324, 800, 73, 12).concat(columns(835, 1300, 39, 9)),
  { h: 16, street: 6, fill: '#dee0e0' });
// Northern edge
district([[398, 0], [705, 0], [670, 80], [370, 80]], columns(250, 760, 62, 9),
  { h: 17, street: 6, fill: '#bcbebe', line: '#555' });
// Eastern strip
district([[952, 0], [1030, 0], [1030, 600], [985, 680], [950, 722], [880, 722], [900, 60]], columns(700, 1400, 46, 9),
  { h: 20, street: 7, fill: '#dcdede', line: '#555' });

// Landmarks
g.fillStyle = '#e0e2e2';
landmarks.forEach((shape) => { poly(shape); g.fill(); });
g.beginPath();
g.ellipse(281, 848, 21, 18, .4, 0, 7);
g.fill();
g.beginPath();
g.arc(85, 752, 6, 0, 7);
g.fill();
g.strokeStyle = '#333';
g.lineWidth = 2;
g.beginPath();
g.moveTo(104, 822);
g.lineTo(162, 853);
g.stroke();

// Pier and waterfront hospital
[
  [[814, 826], [836, 838], [826, 861], [837, 863], [821, 894], [809, 889], [815, 872], [805, 862]],
  [[783, 883], [816, 903], [812, 908], [780, 888]]
].forEach((shape) => { poly(shape); g.fill(); });
g.beginPath();
g.ellipse(786, 913, 4, 6, 0, 0, 7);
g.fill();

// Cross-shaped towers in the park
[[169, 868], [161, 884], [151, 898], [186, 891], [183, 902], [215, 892], [205, 909], [200, 920], [140, 923], [145, 948], [143, 960], [170, 962], [162, 970], [185, 948], [119, 962], [119, 902], [100, 896], [87, 893], [76, 882], [84, 872], [137, 875], [133, 937]]
  .forEach(([x, y], i) => {
    g.save();
    g.translate(x, y);
    g.rotate(i % 2 ? .5 : .2);
    g.fillRect(-5, -1, 10, 3);
    g.fillRect(-1, -5, 3, 10);
    g.restore();
  });
g.fillRect(119, 890, 22, 4);
g.fillRect(130, 883, 5, 20);

// Waterfront building in the north-east
g.fillStyle = '#dcdede';
g.strokeStyle = '#777';
g.lineWidth = 1;
poly([[908, 0], [955, 0], [938, 50], [925, 40], [910, 34], [898, 20]]);
g.fill();
g.stroke();
```
